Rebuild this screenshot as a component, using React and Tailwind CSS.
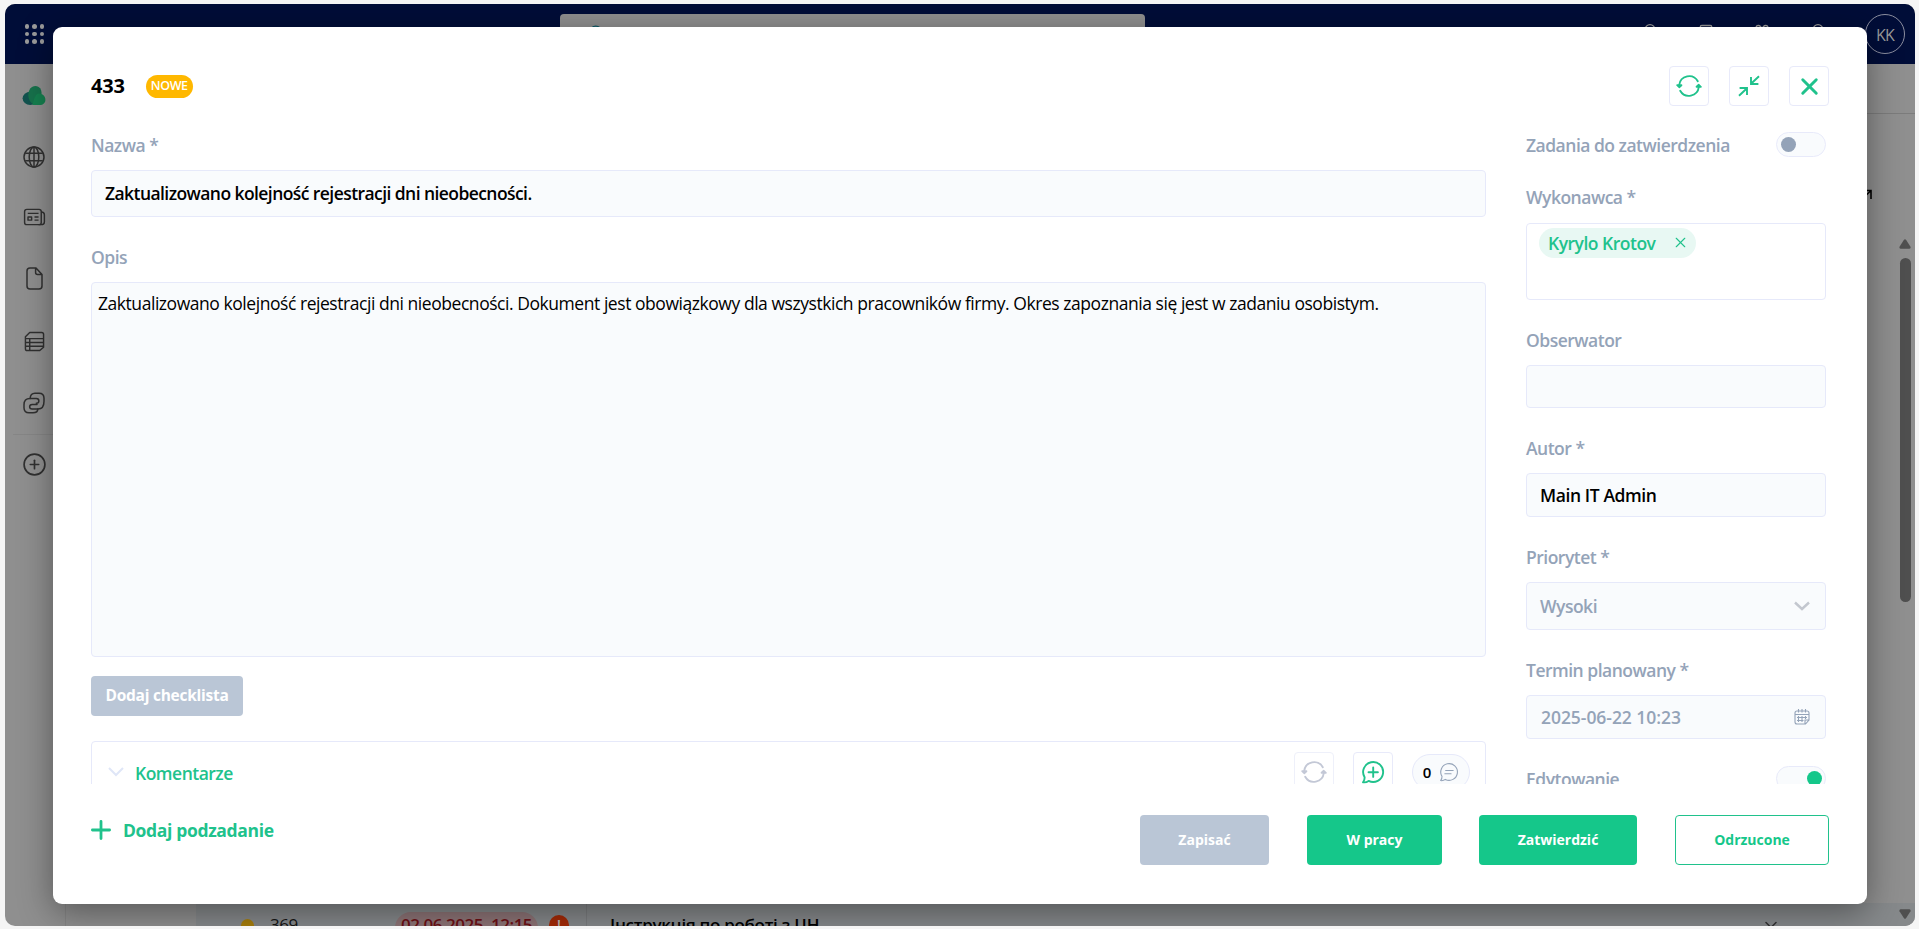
import React from 'react';
import { X, ChevronDown, CirclePlus, Search, Bell, Gift, Bookmark } from 'lucide-react';

const RefreshIcon = ({ className }) => (
    <svg viewBox="0 0 26 26" className={className} fill="none" stroke="currentColor" strokeWidth="1.9" strokeLinecap="round" strokeLinejoin="round">
        <path d="M3.2 12A10 10 0 0 1 21.8 8.200" />
        <path d="M22.8 14A10 10 0 0 1 4.200 17.800" />
        <path d="M1.200 12.200l2 2 2.200-2z" fill="currentColor" />
        <path d="M20.600 13.800l2.200-2 2 2z" fill="currentColor" />
    </svg>
);

const ShrinkIcon = () => (
    <svg viewBox="0 0 24 24" className="size-6" fill="none" stroke="currentColor" strokeWidth="1.9">
        <path d="M22 2.2L14 9.8M14 3v7h7.4" />
        <path d="M2 21.8L10 14.2M2.6 14H10v7" />
    </svg>
);

const GlobeIcon = () => (
    <svg viewBox="0 0 22 22" className="size-[22px]" fill="none" stroke="currentColor" strokeWidth="1.5">
        <circle cx="11" cy="11" r="10" />
        <ellipse cx="11" cy="11" rx="4.800" ry="10" />
        <path d="M2.200 7.200h17.600M2.200 14.800h17.600M11 1v20" />
    </svg>
);

const NewsIcon = () => (
    <svg viewBox="0 0 24 20" className="h-[18px] w-[23px]" fill="none" stroke="currentColor" strokeWidth="1.6" strokeLinejoin="round">
        <rect x="1" y="1.5" width="18.5" height="17" rx="2.5" />
        <path d="M19.500 4.500q3.500 .3 3.500 3v8q0 3-3.500 3h-3M4.500 6h12M12 10h4.500M12 13.500h4.500" />
        <path d="M4.800 10h4v3.500h-4z" />
    </svg>
);

const FileIcon = () => (
    <svg viewBox="0 0 17 23" className="h-[23px] w-[17px]" fill="none" stroke="currentColor" strokeWidth="1.5" strokeLinejoin="round">
        <path d="M4 1h6l6 6.500V19q0 3-3 3H4q-3 0-3-3V4q0-3 3-3zM9.600 1v4.500q0 2 2 2H16" />
    </svg>
);

const TableIcon = () => (
    <svg viewBox="0 0 22 22" className="size-[21px]" fill="none" stroke="currentColor" strokeWidth="1.5" strokeLinejoin="round">
        <path d="M6 1.500h12.500q2 0 2 2V17l-4 3.500H3.500q-2 0-2-2V6zM1.500 8h19M1.500 12h19M1.500 16h19M6 8v12.500" />
    </svg>
);

const LinkIcon = () => (
    <svg viewBox="0 0 22 22" className="size-[22px]" fill="none" stroke="currentColor" strokeWidth="1.5" strokeLinecap="round">
        <path d="M7.200 6.500C7.200 3.200 9 1.200 12 1.200h4c3.200 0 5 2 5 5v3c0 5-2.500 7.800-6 7.800H9.200c-3.400 0-3.400-4.600 0-4.600H14" />
        <path d="M14.800 17c0 2.500-2.200 3.800-4.800 3.800H6c-3.200 0-5-2-5-5v-3c0-4 2.200-6.200 6-6.200h6.300c3.400 0 3.400 4.600 0 4.600" />
    </svg>
);

const CloudLogo = () => (
    <svg viewBox="0 0 24 20" className="h-[19px] w-6">
        <ellipse cx="8" cy="13" rx="8" ry="7" fill="#12534f" />
        <path d="M6 10C6 4 9 0 13.500 0S20 4 20 8l-3 9-5 3q-6-4-6-10z" fill="#17724c" />
        <path d="M17 8c4 0 7 3 7 6.500S21.500 20 18 20h-7.500C12 13 14 8 17 8z" fill="#15804f" />
    </svg>
);

const ChatIcon = ({ className, plus, width }) => (
    <svg viewBox="0 0 24 24" className={className} fill="none" stroke="currentColor" strokeWidth={width} strokeLinecap="round" strokeLinejoin="round">
        <path d="M3.600 17.200A10 10 0 1 1 7.600 20.900Q5 22.800 2 22.300q1.800-2.300 1.600-5.100z" />
        {plus ? <path d="M12.200 7.500v9.400M7.500 12.200h9.400" /> : <path d="M8 10.200h9M7 14.200h7.500" />}
    </svg>
);

const CalendarIcon = () => (
    <svg viewBox="0 0 16 16" className="size-4" fill="none" stroke="currentColor" strokeWidth="1.100">
        <path d="M3 2h10q2 0 2 2v7l-3.500 4H3q-2 0-2-2V4q0-2 2-2zM1 5.500h14M4.500 0v3.500M8 0v3.500M11.500 0v3.500M4.500 7v6M8 7v6M11.500 7v3M3 8.500h10M3 11.500h6.500M11 15v-4h4" />
    </svg>
);

const Label = ({ children }) => (
    <div className="whitespace-nowrap text-[17.5px] font-semibold leading-6 tracking-[-0.5px] text-[#94a3b8]">{children}</div>
);

const Toggle = ({ on }) => (
    <div className={`flex h-[25px] w-[50px] items-center rounded-full border border-[#e8eafa] bg-[#f9fbfd] px-1 ${on ? 'justify-end pr-[3px]' : ''}`}>
        <span className={`size-[15px] rounded-full ${on ? 'bg-[#15c78a]' : 'bg-[#94a3b8]'}`} />
    </div>
);

const IconButton = ({ children }) => (
    <button className="flex size-10 shrink-0 items-center justify-center rounded border border-[#e8eafa] bg-white text-[#20c28c]">{children}</button>
);

const field = 'rounded border border-[#e6e9fa] bg-[#f9fbfd]';

function Backdrop() {
    return (
        <div className="flex h-full flex-col">
            <header className="flex h-[60px] shrink-0 items-start justify-between bg-[#000d38] text-[#9a9a9a]">
                <div className="grid grid-cols-3 gap-x-[3px] gap-y-[3px] pl-[19.5px] pt-5">
                    {Array.from({ length: 9 }).map((_, i) => (
                        <span key={i} className="size-[4.500px] rounded-full bg-[#9a9a9a]" />
                    ))}
                </div>
                <div className="ml-[515.5px] mt-2.5 h-10 w-[585px] rounded bg-[#8f8f8f] pl-[28px] pt-[10px] text-[#0c5866]">
                    <Search size={17} />
                </div>
                <div className="mr-[10px] flex flex-1 items-start justify-end pt-2.5">
                    <div className="mr-[37px] mt-[9px] flex gap-[36px]">
                        <Bell size={20} strokeWidth={1.600} />
                        <Bookmark size={20} strokeWidth={1.600} />
                        <Gift size={20} strokeWidth={1.600} />
                        <Bell size={20} strokeWidth={1.600} />
                    </div>
                    <div className="flex size-10 items-center justify-center rounded-full border border-[#8c8fa0] pt-0.5 text-base tracking-[-0.8px]">KK</div>
                </div>
            </header>
            <div className="flex min-h-0 flex-1">
                <aside className="flex w-[60px] shrink-0 flex-col items-center pr-[2px] text-[#303030]">
                    <div className="mt-[22px]"><CloudLogo /></div>
                    <div className="mt-[41px]"><GlobeIcon /></div>
                    <div className="mt-[40px]"><NewsIcon /></div>
                    <div className="mt-[41px]"><FileIcon /></div>
                    <div className="mt-[41px]"><TableIcon /></div>
                    <div className="mt-[40px]"><LinkIcon /></div>
                    <div className="mt-[20px] h-px w-[50px] self-end bg-[#868686]" />
                    <CirclePlus className="mt-[17px]" size={25} strokeWidth={1.600} />
                </aside>
                <main className="flex min-w-0 flex-1 flex-col border-l border-[#858585]">
                    <div className="h-[50px] shrink-0 border-b border-[#7c7c7c]" />
                    <div className="flex justify-end pr-[43px] pt-[75px] text-black">
                        <svg viewBox="0 0 12 12" className="size-3" fill="none" stroke="currentColor" strokeWidth="1.600"><path d="M1 11L10.500 2M3 1.500h8V10" /></svg>
                    </div>
                    <div className="mt-auto flex h-[23px] pl-[130px] text-[17px] font-semibold text-[#151515]">
                        <div className="flex flex-1 items-start overflow-hidden bg-[#86898b] pl-[45px]">
                            <span className="mt-[16px] size-[13px] rounded-full bg-[#a87f0c]" />
                            <span className="ml-4 mt-[9px] w-[125px] font-normal tracking-[-0.5px]">369</span>
                            <span className="mt-[9px] h-8 w-[143px] whitespace-nowrap rounded-full bg-[#8d7476] text-center text-[#6e1015] tracking-[-0.5px]">02.06.2025, 12:15</span>
                            <span className="ml-[11px] mt-[12px] flex size-5 justify-center rounded-full bg-[#a52a06] text-sm text-[#bbb]">!</span>
                            <span className="ml-[17px] h-8 w-px bg-[#7b7d7f]" />
                            <span className="ml-[23px] mt-[9px] whitespace-nowrap tracking-[-0.3px] text-black">Інструкція по роботі з ЦН</span>
                            <ChevronDown className="ml-auto mr-[134px] mt-[12px] text-[#333]" size={20} strokeWidth={1.800} />
                        </div>
                    </div>
                </main>
            </div>
        </div>
    );
}

export default function App() {
    return (
        <div className="relative h-[929px] w-[1919px] overflow-hidden bg-[#f5f5f5] pl-[5px] pt-1 font-['Open_Sans',sans-serif]">
            <div className="relative h-[922px] w-[1910px] overflow-hidden rounded-[10px] bg-[#8f8f8f]">
                <Backdrop />

                {/* page scrollbar */}
                <div className="absolute right-[4px] top-[235px] flex h-[680px] w-3 flex-col items-center text-[#4f4f4f]">
                    <svg viewBox="0 0 12 10" className="h-2.5 w-3" fill="currentColor"><path d="M5 .8q1-1 2 0l4.500 7q.5 1.700-1 2H1.500q-1.500-.3-1-2z" /></svg>
                    <div className="mt-[9px] h-[344px] w-[11px] rounded-full bg-[#4f4f4f]" />
                    <svg viewBox="0 0 12 10" className="mt-auto h-2.5 w-3 rotate-180" fill="currentColor"><path d="M5 .8q1-1 2 0l4.500 7q.5 1.700-1 2H1.500q-1.500-.3-1-2z" /></svg>
                </div>

                {/* task dialog */}
                <section className="absolute left-12 top-[23px] flex h-[877px] w-[1814px] flex-col rounded-[9px] bg-white pl-[38px] pr-[38px] shadow-[0_8px_34px_rgba(0,0,0,0.4)]">
                    <div className="flex shrink-0 items-center pt-[39px]">
                        <h1 className="text-xl font-bold tracking-[-0.2px] text-black">433</h1>
                        <span className="ml-[21px] flex h-[23px] w-[47px] items-center justify-center rounded-full bg-[#ffb800] text-[12.5px] font-semibold tracking-[-0.4px] text-white">NOWE</span>
                        <div className="ml-auto flex gap-5">
                            <IconButton><RefreshIcon className="size-[26px]" /></IconButton>
                            <IconButton><ShrinkIcon /></IconButton>
                            <IconButton><X size={27} strokeWidth={2.600} /></IconButton>
                        </div>
                    </div>

                    <div className="flex h-[678px] shrink-0 justify-between overflow-hidden pr-[3px]">
                        <div className="flex w-[1395px] shrink-0 flex-col pt-[27px]">
                            <Label>Nazwa *</Label>
                            <div className={`${field} mt-[13px] flex h-[47px] shrink-0 items-center pl-[13px] text-[17.5px] font-semibold tracking-[-0.57px] text-black`}>
                                Zaktualizowano kolejność rejestracji dni nieobecności.
                            </div>
                            <div className="mt-[28px]"><Label>Opis</Label></div>
                            <div className={`${field} mt-[13px] h-[375px] shrink-0 whitespace-nowrap pl-1.5 pt-2 text-[17.5px] leading-6 tracking-[-0.45px] text-black`}>
                                Zaktualizowano kolejność rejestracji dni nieobecności. Dokument jest obowiązkowy dla wszystkich pracowników firmy. Okres zapoznania się jest w zadaniu osobistym.
                            </div>
                            <button className="mt-[19px] h-10 w-[152px] shrink-0 rounded bg-[#bac6d6] text-[15.5px] font-bold tracking-[-0.25px] text-white">Dodaj checklista</button>
                            <div className="mt-[25px] flex h-[70px] shrink-0 rounded border border-[#e6e9fa] pl-[16px] pr-[15px]">
                                <svg viewBox="0 0 16 10" className="mt-[25px] h-2.5 w-4" fill="none" stroke="#dfe6f7" strokeWidth="2"><path d="M1 1l7 7 7-7" /></svg>
                                <span className="ml-[11px] mt-[19px] text-[17.5px] font-semibold leading-6 tracking-[-0.5px] text-[#20c28c]">Komentarze</span>
                                <div className="ml-auto flex gap-[19px] pt-[10px]">
                                    <button className="flex size-10 items-center justify-center rounded border border-[#eef0fa] text-[#c3c8d6]"><RefreshIcon className="size-[26px]" /></button>
                                    <IconButton><ChatIcon plus width="1.900" className="size-6" /></IconButton>
                                    <div className="mt-0.5 flex h-9 w-[58px] items-center justify-center gap-2 rounded-full border border-[#e6e9fa] bg-[#f9fbfd]">
                                        <span className="text-[15px] font-semibold text-black">0</span>
                                        <ChatIcon width="1.300" className="size-5 text-[#94a3b8]" />
                                    </div>
                                </div>
                            </div>
                        </div>

                        <div className="flex w-[300px] shrink-0 flex-col pt-[26px]">
                            <div className="flex h-[25px] items-center justify-between">
                                <Label>Zadania do zatwierdzenia</Label>
                                <Toggle />
                            </div>
                            <div className="mt-[28px]"><Label>Wykonawca *</Label></div>
                            <div className="mt-[14px] h-[77px] shrink-0 rounded border border-[#e6e9fa] pl-3 pt-1">
                                <div className="flex h-[30px] w-[157px] items-center justify-between rounded-full bg-[#e8f8f3] pl-[9px] pr-[7px] text-[17.5px] font-semibold tracking-[-0.5px] text-[#20c28c]">
                                    Kyrylo Krotov
                                    <X size={17} strokeWidth={1.600} className="-mt-0.5" />
                                </div>
                            </div>
                            <div className="mt-[28px]"><Label>Obserwator</Label></div>
                            <div className={`${field} mt-[13px] h-[43px] shrink-0`} />
                            <div className="mt-[28px]"><Label>Autor *</Label></div>
                            <div className={`${field} mt-[13px] flex h-[44px] shrink-0 items-center pl-[13px] text-[17.5px] font-semibold tracking-[-0.4px] text-black`}>Main IT Admin</div>
                            <div className="mt-[28px]"><Label>Priorytet *</Label></div>
                            <div className={`${field} mt-[13px] flex h-[48px] shrink-0 items-center justify-between pl-[13px] pr-[15px]`}>
                                <Label>Wysoki</Label>
                                <svg viewBox="0 0 16 10" className="h-2.5 w-4" fill="none" stroke="#c3c7cf" strokeWidth="2.400"><path d="M1 1.500l7 6.500 7-6.500" /></svg>
                            </div>
                            <div className="mt-[28px]"><Label>Termin planowany *</Label></div>
                            <div className={`${field} mt-[13px] flex h-[44px] shrink-0 items-center justify-between pl-[14px] pr-[15px] text-[#94a3b8]`}>
                                <span className="text-[17.5px] font-semibold leading-6 tracking-[-0.05px]">2025-06-22 10:23</span>
                                <CalendarIcon />
                            </div>
                            <div className="mt-[27px] flex items-center justify-between">
                                <Label>Edytowanie</Label>
                                <Toggle on />
                            </div>
                        </div>
                    </div>

                    <div className="flex items-start justify-between pt-[31px]">
                        <button className="flex items-center gap-3 text-[17.5px] font-bold leading-[30px] tracking-[-0.35px] text-[#20c28c]">
                            <svg viewBox="0 0 20 20" className="size-5" stroke="currentColor" strokeWidth="2.800" strokeLinecap="round"><path d="M10 1.400v17.200M1.400 10h17.200" /></svg>
                            Dodaj podzadanie
                        </button>
                        <div className="flex text-sm font-bold text-white">
                            <button className="h-[50px] w-[129px] rounded bg-[#bac6d6]">Zapisać</button>
                            <button className="ml-[38px] h-[50px] w-[135px] rounded bg-[#15c78a]">W pracy</button>
                            <button className="ml-[37px] h-[50px] w-[158px] rounded bg-[#15c78a]">Zatwierdzić</button>
                            <button className="ml-[38px] h-[50px] w-[154px] rounded border border-[#20c28c] text-[#15c78a]">Odrzucone</button>
                        </div>
                    </div>
                </section>
            </div>
        </div>
    );
}
